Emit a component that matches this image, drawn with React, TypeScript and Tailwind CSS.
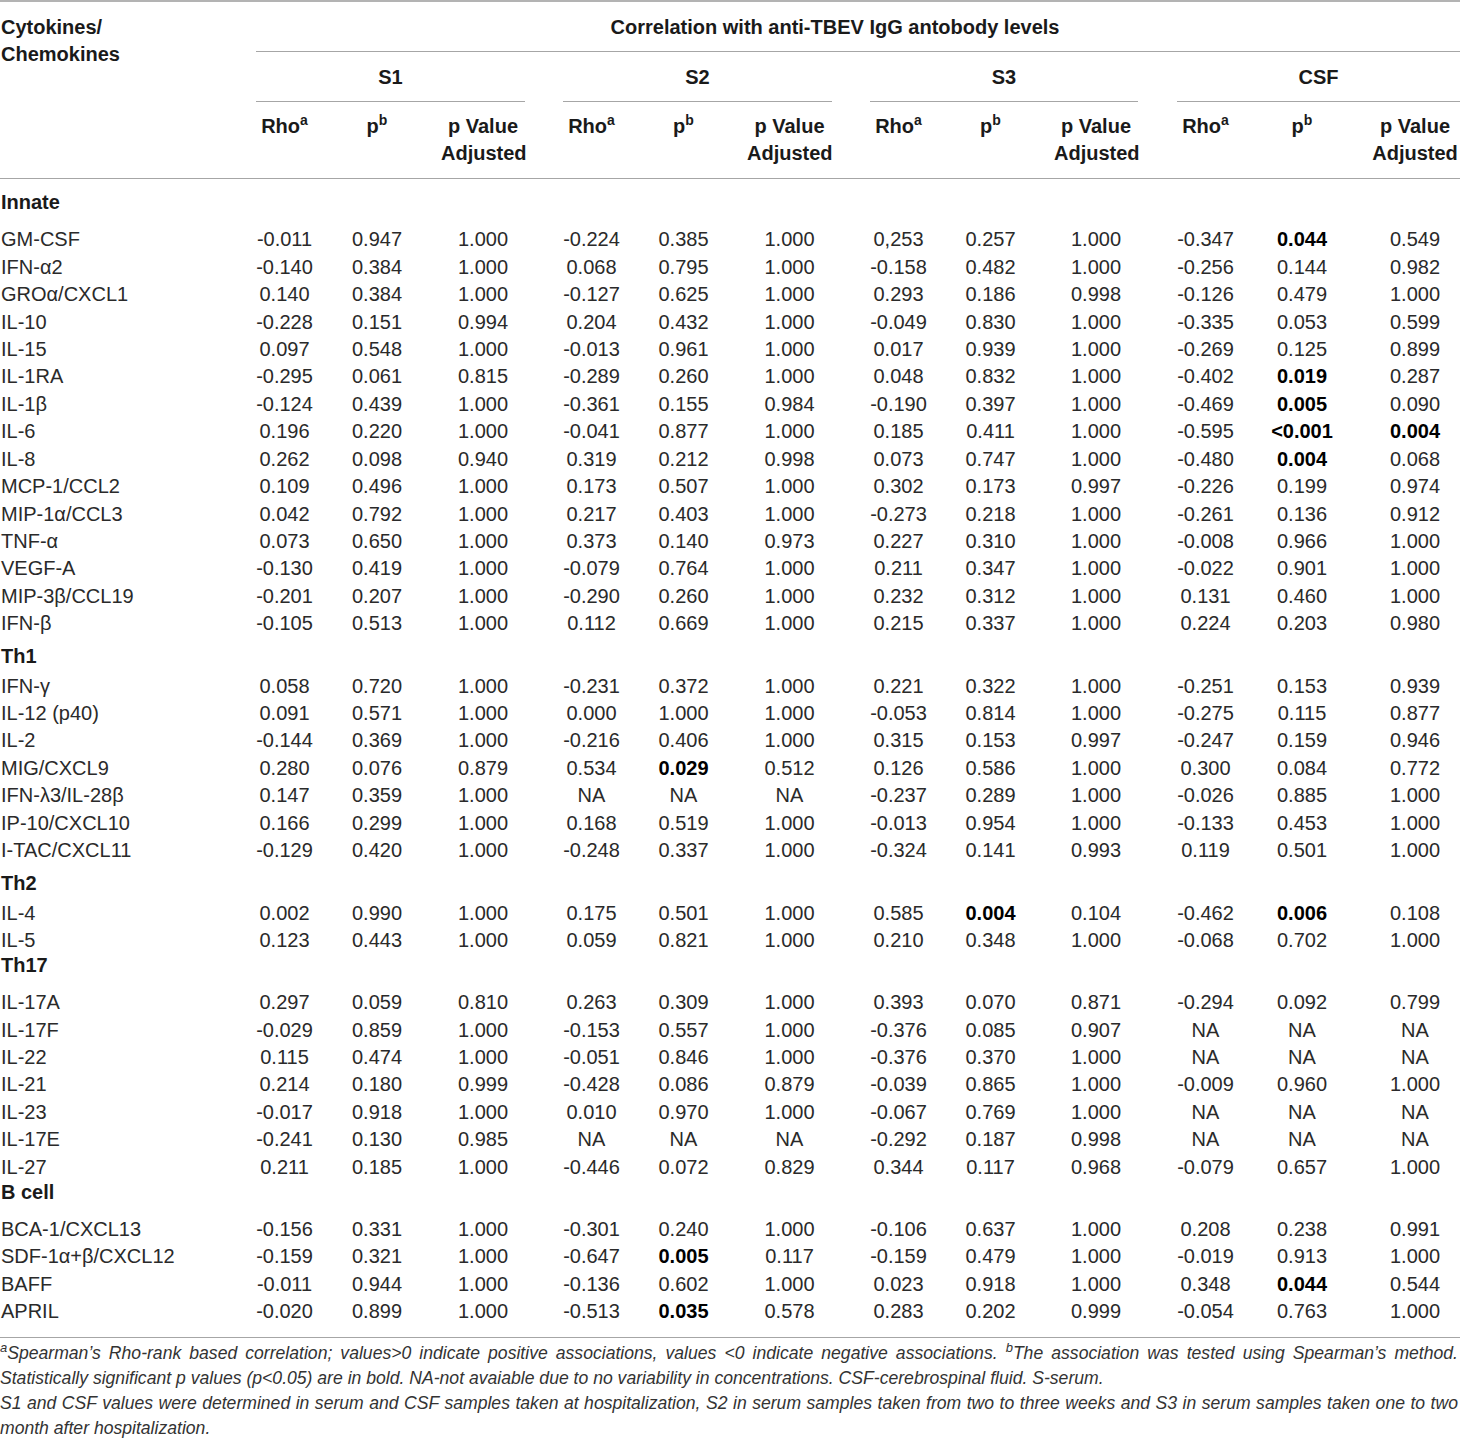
import React from "react";

const COLS =
  "grid grid-cols-[256px_57px_128px_84px_38px_57px_127px_85px_38px_57px_127px_84px_39px_57px_136px_90px]";

type Row = [string, string[]];
type Group = { label: string; kind: "innate" | "before" | "after"; rows: Row[] };

const r = (name: string, v: string): Row => [name, v.split(" ")];

const groups: Group[] = [
  {
    label: "Innate",
    kind: "innate",
    rows: [
      r("GM-CSF", "-0.011 0.947 1.000 -0.224 0.385 1.000 0,253 0.257 1.000 -0.347 !0.044 0.549"),
      r("IFN-α2", "-0.140 0.384 1.000 0.068 0.795 1.000 -0.158 0.482 1.000 -0.256 0.144 0.982"),
      r("GROα/CXCL1", "0.140 0.384 1.000 -0.127 0.625 1.000 0.293 0.186 0.998 -0.126 0.479 1.000"),
      r("IL-10", "-0.228 0.151 0.994 0.204 0.432 1.000 -0.049 0.830 1.000 -0.335 0.053 0.599"),
      r("IL-15", "0.097 0.548 1.000 -0.013 0.961 1.000 0.017 0.939 1.000 -0.269 0.125 0.899"),
      r("IL-1RA", "-0.295 0.061 0.815 -0.289 0.260 1.000 0.048 0.832 1.000 -0.402 !0.019 0.287"),
      r("IL-1β", "-0.124 0.439 1.000 -0.361 0.155 0.984 -0.190 0.397 1.000 -0.469 !0.005 0.090"),
      r("IL-6", "0.196 0.220 1.000 -0.041 0.877 1.000 0.185 0.411 1.000 -0.595 !<0.001 !0.004"),
      r("IL-8", "0.262 0.098 0.940 0.319 0.212 0.998 0.073 0.747 1.000 -0.480 !0.004 0.068"),
      r("MCP-1/CCL2", "0.109 0.496 1.000 0.173 0.507 1.000 0.302 0.173 0.997 -0.226 0.199 0.974"),
      r("MIP-1α/CCL3", "0.042 0.792 1.000 0.217 0.403 1.000 -0.273 0.218 1.000 -0.261 0.136 0.912"),
      r("TNF-α", "0.073 0.650 1.000 0.373 0.140 0.973 0.227 0.310 1.000 -0.008 0.966 1.000"),
      r("VEGF-A", "-0.130 0.419 1.000 -0.079 0.764 1.000 0.211 0.347 1.000 -0.022 0.901 1.000"),
      r("MIP-3β/CCL19", "-0.201 0.207 1.000 -0.290 0.260 1.000 0.232 0.312 1.000 0.131 0.460 1.000"),
      r("IFN-β", "-0.105 0.513 1.000 0.112 0.669 1.000 0.215 0.337 1.000 0.224 0.203 0.980"),
    ],
  },
  {
    label: "Th1",
    kind: "before",
    rows: [
      r("IFN-γ", "0.058 0.720 1.000 -0.231 0.372 1.000 0.221 0.322 1.000 -0.251 0.153 0.939"),
      r("IL-12 (p40)", "0.091 0.571 1.000 0.000 1.000 1.000 -0.053 0.814 1.000 -0.275 0.115 0.877"),
      r("IL-2", "-0.144 0.369 1.000 -0.216 0.406 1.000 0.315 0.153 0.997 -0.247 0.159 0.946"),
      r("MIG/CXCL9", "0.280 0.076 0.879 0.534 !0.029 0.512 0.126 0.586 1.000 0.300 0.084 0.772"),
      r("IFN-λ3/IL-28β", "0.147 0.359 1.000 NA NA NA -0.237 0.289 1.000 -0.026 0.885 1.000"),
      r("IP-10/CXCL10", "0.166 0.299 1.000 0.168 0.519 1.000 -0.013 0.954 1.000 -0.133 0.453 1.000"),
      r("I-TAC/CXCL11", "-0.129 0.420 1.000 -0.248 0.337 1.000 -0.324 0.141 0.993 0.119 0.501 1.000"),
    ],
  },
  {
    label: "Th2",
    kind: "before",
    rows: [
      r("IL-4", "0.002 0.990 1.000 0.175 0.501 1.000 0.585 !0.004 0.104 -0.462 !0.006 0.108"),
      r("IL-5", "0.123 0.443 1.000 0.059 0.821 1.000 0.210 0.348 1.000 -0.068 0.702 1.000"),
    ],
  },
  {
    label: "Th17",
    kind: "after",
    rows: [
      r("IL-17A", "0.297 0.059 0.810 0.263 0.309 1.000 0.393 0.070 0.871 -0.294 0.092 0.799"),
      r("IL-17F", "-0.029 0.859 1.000 -0.153 0.557 1.000 -0.376 0.085 0.907 NA NA NA"),
      r("IL-22", "0.115 0.474 1.000 -0.051 0.846 1.000 -0.376 0.370 1.000 NA NA NA"),
      r("IL-21", "0.214 0.180 0.999 -0.428 0.086 0.879 -0.039 0.865 1.000 -0.009 0.960 1.000"),
      r("IL-23", "-0.017 0.918 1.000 0.010 0.970 1.000 -0.067 0.769 1.000 NA NA NA"),
      r("IL-17E", "-0.241 0.130 0.985 NA NA NA -0.292 0.187 0.998 NA NA NA"),
      r("IL-27", "0.211 0.185 1.000 -0.446 0.072 0.829 0.344 0.117 0.968 -0.079 0.657 1.000"),
    ],
  },
  {
    label: "B cell",
    kind: "after",
    rows: [
      r("BCA-1/CXCL13", "-0.156 0.331 1.000 -0.301 0.240 1.000 -0.106 0.637 1.000 0.208 0.238 0.991"),
      r("SDF-1α+β/CXCL12", "-0.159 0.321 1.000 -0.647 !0.005 0.117 -0.159 0.479 1.000 -0.019 0.913 1.000"),
      r("BAFF", "-0.011 0.944 1.000 -0.136 0.602 1.000 0.023 0.918 1.000 0.348 !0.044 0.544"),
      r("APRIL", "-0.020 0.899 1.000 -0.513 !0.035 0.578 0.283 0.202 0.999 -0.054 0.763 1.000"),
    ],
  },
];

function Val({ v }: { v: string }) {
  const bold = v.startsWith("!");
  const text = bold ? v.slice(1) : v;
  return (
    <div className={`text-center whitespace-nowrap ${bold ? "font-bold text-black" : ""}`}>{text}</div>
  );
}

function DataRow({ row }: { row: Row }) {
  const [name, vals] = row;
  const cells: React.ReactNode[] = [
    <div key="n" className="pl-[1px] whitespace-nowrap">
      {name}
    </div>,
  ];
  vals.forEach((v, i) => {
    cells.push(<Val key={`v${i}`} v={v} />);
    if (i % 3 === 2 && i < 11) cells.push(<div key={`g${i}`} />);
  });
  return <div className={`${COLS} h-[27.43px] items-center`}>{cells}</div>;
}

function GroupLabel({ g }: { g: Group }) {
  if (g.kind === "innate")
    return (
      <div className="h-[45.3px] pt-[10.3px] pl-[1px] font-bold text-[#1a1a1a] leading-[27.43px]">{g.label}</div>
    );
  if (g.kind === "before")
    return (
      <div className="h-[35px] pt-[7.6px] pl-[1px] font-bold text-[#1a1a1a] leading-[27.43px]">{g.label}</div>
    );
  return (
    <div className="h-[34.8px] pb-[7.4px] pl-[1px] font-bold text-[#1a1a1a] leading-[27.43px]">{g.label}</div>
  );
}

export default function App() {
  return (
    <div className="w-[1460px] min-h-[1443px] bg-white text-[#2a2a2a] font-['Liberation_Sans',Arial,sans-serif] text-[20px]">
      <div className="border-t-2 border-[#b3b3b3]">
        {/* header */}
        <div className={`${COLS} grid-rows-[50px_50px_76px] border-b border-[#a6a6a6] font-bold text-[#1a1a1a]`}>
          <div className="col-start-1 row-start-1 row-span-3 pt-[12px] pl-[1px] leading-[27px]">
            Cytokines/
            <br />
            Chemokines
          </div>
          <div className="col-start-2 col-span-15 row-start-1 border-b border-[#a6a6a6] flex items-center justify-center pr-[46px]">
            Correlation with anti-TBEV IgG antobody levels
          </div>
          <div className="col-start-2 col-span-3 row-start-2 border-b border-[#a6a6a6] flex items-center justify-center">
            S1
          </div>
          <div className="col-start-6 col-span-3 row-start-2 border-b border-[#a6a6a6] flex items-center justify-center">
            S2
          </div>
          <div className="col-start-10 col-span-3 row-start-2 border-b border-[#a6a6a6] flex items-center justify-center">
            S3
          </div>
          <div className="col-start-14 col-span-3 row-start-2 border-b border-[#a6a6a6] flex items-center justify-center">
            CSF
          </div>
          {[2, 6, 10, 14].map((s) => (
            <React.Fragment key={s}>
              <div
                className={`row-start-3 pt-[11px] leading-[27px] text-center ${
                  s === 2 ? "col-start-2" : s === 6 ? "col-start-6" : s === 10 ? "col-start-10" : "col-start-14"
                }`}
              >
                Rho<sup className="text-[14px] -top-[0.6em]">a</sup>
              </div>
              <div
                className={`row-start-3 pt-[11px] leading-[27px] text-center ${
                  s === 2 ? "col-start-3" : s === 6 ? "col-start-7" : s === 10 ? "col-start-11" : "col-start-15"
                }`}
              >
                p<sup className="text-[14px] -top-[0.6em]">b</sup>
              </div>
              <div
                className={`row-start-3 pt-[11px] leading-[27px] text-center whitespace-nowrap ${
                  s === 2 ? "col-start-4" : s === 6 ? "col-start-8" : s === 10 ? "col-start-12" : "col-start-16"
                }`}
              >
                p Value
                <br />
                Adjusted
              </div>
            </React.Fragment>
          ))}
        </div>

        {/* body */}
        <div className="pb-[13px] border-b border-[#a6a6a6]">
          {groups.map((g) => (
            <React.Fragment key={g.label}>
              <GroupLabel g={g} />
              {g.rows.map((row) => (
                <DataRow key={row[0]} row={row} />
              ))}
            </React.Fragment>
          ))}
        </div>

        {/* footnotes */}
        <div className="pt-[3px] pr-[2px] italic text-[17.6px] leading-[25px] text-[#333]">
          <div className="text-justify [text-align-last:justify] whitespace-nowrap">
            <sup className="text-[13px]">a</sup>Spearman’s Rho-rank based correlation; values&gt;0 indicate positive
            associations, values &lt;0 indicate negative associations. <sup className="text-[13px]">b</sup>The
            association was tested using Spearman’s method.
          </div>
          <div className="whitespace-nowrap">
            Statistically significant p values (p&lt;0.05) are in bold. NA-not avaiable due to no variability in
            concentrations. CSF-cerebrospinal fluid. S-serum.
          </div>
          <div className="text-justify [text-align-last:justify] whitespace-nowrap">
            S1 and CSF values were determined in serum and CSF samples taken at hospitalization, S2 in serum samples
            taken from two to three weeks and S3 in serum samples taken one to two
          </div>
          <div className="whitespace-nowrap">month after hospitalization.</div>
        </div>
      </div>
    </div>
  );
}
